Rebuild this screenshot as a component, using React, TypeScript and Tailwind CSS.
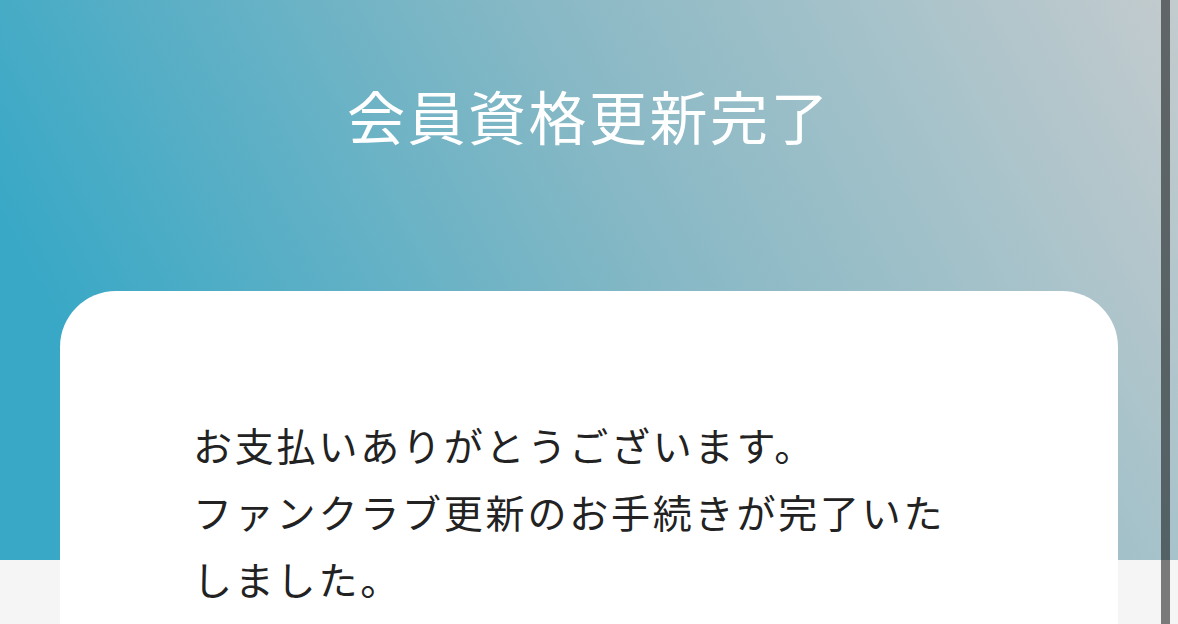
import React from 'react'

const jp = { fontFamily: '"Noto Sans CJK JP", "Noto Sans", sans-serif' }

export default function App() {
  return (
    <div className="relative min-h-screen w-full overflow-hidden bg-[#f5f5f5]" style={jp}>
      <header className="h-[560px] bg-[linear-gradient(62deg,#38a8c6_12%,#86b8c5_55%,#c3cbce_100%)] pt-[81px]">
        <h1 className="text-center text-[58px] leading-[68px] tracking-[2.5px] font-normal text-white">
          会員資格更新完了
        </h1>
      </header>

      <main className="-mt-[269px] mx-[60px] min-h-[400px] rounded-t-[56px] bg-white pl-[133px] pr-[145px] pt-[120px]">
        <p className="text-[39px] leading-[67px] tracking-[2.8px] text-[#222]">
          お支払いありがとうございます。
          <br />
          ファンクラブ更新のお手続きが完了いたしました。
        </p>
      </main>

      {/* scrollbar thumb overlay */}
      <div className="absolute right-[8px] top-0 h-full w-[9px] bg-black/50" />
    </div>
  )
}
